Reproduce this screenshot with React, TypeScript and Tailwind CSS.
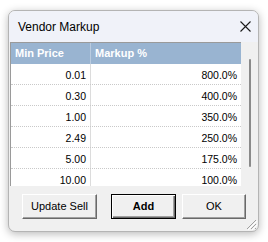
import React from "react";

const rows: [string, string][] = [
  ["0.01", "800.0%"],
  ["0.30", "400.0%"],
  ["1.00", "350.0%"],
  ["2.49", "250.0%"],
  ["5.00", "175.0%"],
  ["10.00", "100.0%"],
];

const font = { fontFamily: '"Liberation Sans", Arial, sans-serif' };

export default function App() {
  return (
    <div className="w-[268px] h-[242px] bg-white overflow-hidden pt-[10px] pl-[8px]" style={font}>
      <div className="relative w-[251px] h-[222px] flex flex-col border border-[#b4b4b4] rounded-[7px] bg-[#f0f0f0] overflow-hidden shadow-[0_2px_9px_rgba(0,0,0,0.28)]">
        {/* Title bar */}
        <div className="h-[31px] shrink-0 bg-[#f0f2f9] flex items-center justify-between pl-[9px] pr-[9px]">
          <span className="text-[12px] text-black leading-none">Vendor Markup</span>
          <svg width="11" height="11" viewBox="0 0 11 11" className="-mr-[2px]">
            <path d="M0.5 0.5L10.5 10.5M10.5 0.5L0.5 10.5" stroke="#1a1a1a" strokeWidth="1.1" />
          </svg>
        </div>
        {/* Body */}
        <div className="h-[144px] shrink-0 flex pl-[1px]">
          <div className="w-[231px] border-l border-t border-[#9a9a9a] bg-white overflow-hidden flex flex-col">
            <div className="h-[21px] shrink-0 flex bg-[#99b4d1] text-white font-bold text-[11px]">
              <div className="w-[80px] border-r border-[#b9cbe0] flex items-center pl-[4px]">Min Price</div>
              <div className="flex-1 flex items-center pl-[4px]">Markup %</div>
            </div>
            {rows.map(([a, b]) => (
              <div key={a} className="h-[21px] shrink-0 flex border-b border-dotted border-[#c9c9c9] text-[10.5px] text-black">
                <div className="w-[80px] border-r border-[#dcdcdc] flex items-end justify-end pr-[4px] pb-[3px] leading-[12px]">{a}</div>
                <div className="flex-1 flex items-end justify-end pr-[4px] pb-[3px] leading-[12px]">{b}</div>
              </div>
            ))}
          </div>
          <div className="w-[17px] flex justify-center pt-[17px] pl-[1px]">
            <div className="w-[2px] h-[108px] rounded-full bg-[#8a8a8a]" />
          </div>
        </div>
        {/* Bottom panel */}
        <div className="flex-1 flex items-start pt-[8px] pl-[13px] text-[11px] text-black">
          <button className="w-[75px] h-[25px] bg-[#f0f0f0] border-t border-l border-white border-b border-r border-b-[#696969] border-r-[#696969] shadow-[inset_-1px_-1px_0_#a0a0a0] flex items-center justify-center">
            Update Sell
          </button>
          <button className="ml-[14px] w-[65px] h-[25px] bg-[#f0f0f0] border border-black shadow-[inset_1px_1px_0_#ffffff,inset_-1px_-1px_0_#696969,inset_-2px_-2px_0_#a0a0a0] flex items-center justify-center font-bold">
            Add
          </button>
          <button className="ml-[6px] w-[64px] h-[25px] bg-[#f0f0f0] border-t border-l border-white border-b border-r border-b-[#696969] border-r-[#696969] shadow-[inset_-1px_-1px_0_#a0a0a0] flex items-center justify-center">
            OK
          </button>
        </div>
        <svg width="12" height="12" viewBox="0 0 12 12" className="absolute right-[1px] bottom-[1px]">
          <path d="M11 2L2 11M11 6L6 11M11 10L10 11" stroke="#a0a0a0" strokeWidth="1" />
          <path d="M12 3L3 12M12 7L7 12" stroke="#ffffff" strokeWidth="1" />
        </svg>
      </div>
    </div>
  );
}
